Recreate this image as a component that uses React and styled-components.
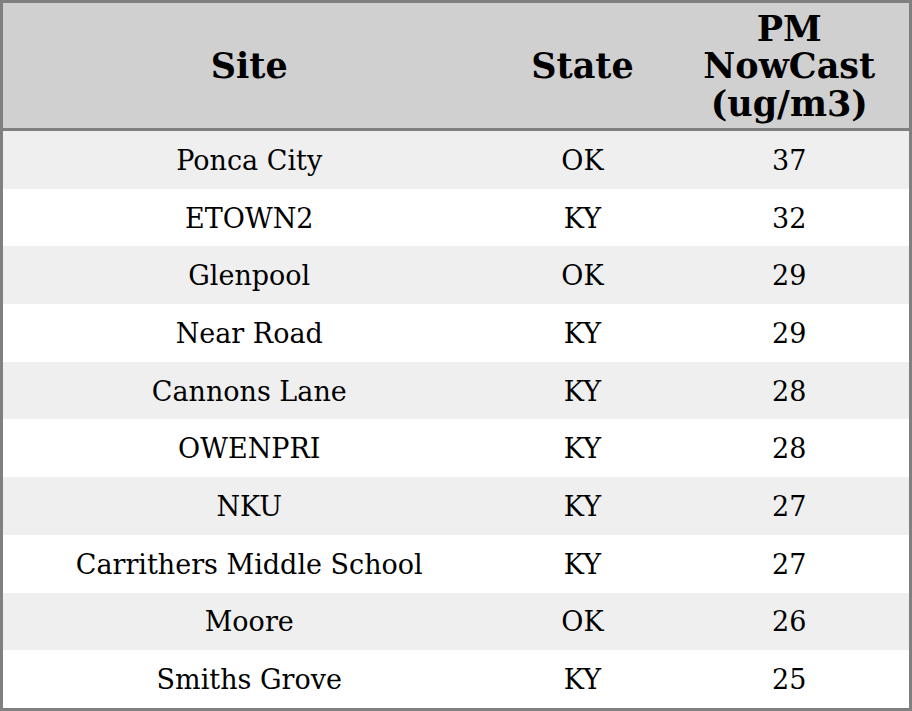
import React from "react";
import styled, { createGlobalStyle } from "styled-components";

const rows = [
  { site: "Ponca City", state: "OK", pm: 37 },
  { site: "ETOWN2", state: "KY", pm: 32 },
  { site: "Glenpool", state: "OK", pm: 29 },
  { site: "Near Road", state: "KY", pm: 29 },
  { site: "Cannons Lane", state: "KY", pm: 28 },
  { site: "OWENPRI", state: "KY", pm: 28 },
  { site: "NKU", state: "KY", pm: 27 },
  { site: "Carrithers Middle School", state: "KY", pm: 27 },
  { site: "Moore", state: "OK", pm: 26 },
  { site: "Smiths Grove", state: "KY", pm: 25 },
];

const App = () => (
  <>
    <GlobalStyle />
    <Table>
      <colgroup>
        <SiteCol />
        <StateCol />
        <col />
      </colgroup>
      <thead>
        <tr>
          <Th>Site</Th>
          <Th>State</Th>
          <Th>
            PM
            <br />
            NowCast
            <br />
            (ug/m3)
          </Th>
        </tr>
      </thead>
      <tbody>
        {rows.map((r, i) => (
          <Row key={r.site} $striped={i % 2 === 0}>
            <Td>{r.site}</Td>
            <Td>{r.state}</Td>
            <Td>{r.pm}</Td>
          </Row>
        ))}
      </tbody>
    </Table>
  </>
);

export default App;

// Styled Components

const GlobalStyle = createGlobalStyle`
  html, body {
    margin: 0;
    padding: 0;
    background: #ffffff;
  }
`;

const Table = styled.table`
  width: 912px;
  height: 711px;
  border-collapse: collapse;
  table-layout: fixed;
  border: 3px solid #808080;
  font-family: "DejaVu Serif", serif;
  color: #000;
`;

const SiteCol = styled.col`
  width: 494px;
`;

const StateCol = styled.col`
  width: 174px;
`;

const Th = styled.th`
  height: 124px;
  padding: 1px 0 0;
  background: #d0d0d0;
  border-bottom: 3px solid #808080;
  font-size: 35px;
  font-weight: bold;
  line-height: 37.5px;
  text-align: center;
  vertical-align: middle;
`;

const Row = styled.tr`
  background: ${(p) => (p.$striped ? "#efefef" : "#ffffff")};
`;

const Td = styled.td`
  height: 55.7px;
  padding: 2px 0 0;
  font-size: 27px;
  line-height: 32px;
  text-align: center;
  vertical-align: middle;
`;
